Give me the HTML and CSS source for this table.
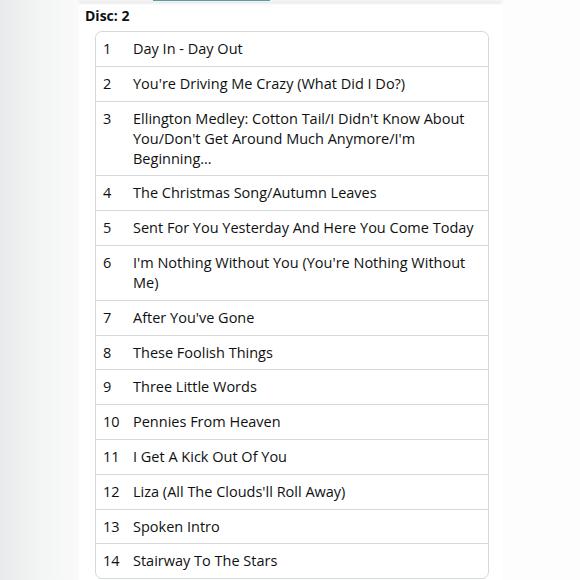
FILE: index.html
```html
<!DOCTYPE html>
<html>
<head>
	<title>Disc 2</title>
	<link rel="stylesheet" href="styles.css">
</head>
<body>
	<div class="page">
		<div class="side-left"></div>
		<div class="panel">
			<div class="top-bar"><div class="tab"></div></div>
			<h2 class="disc">Disc: 2</h2>
			<table class="tracks">
				<tr><td class="num">1</td><td class="title">Day In - Day Out</td></tr>
				<tr><td class="num">2</td><td class="title">You're Driving Me Crazy (What Did I Do?)</td></tr>
				<tr><td class="num">3</td><td class="title">Ellington Medley: Cotton Tail/I Didn't Know About You/Don't Get Around Much Anymore/I'm Beginning...</td></tr>
				<tr><td class="num">4</td><td class="title">The Christmas Song/Autumn Leaves</td></tr>
				<tr><td class="num">5</td><td class="title">Sent For You Yesterday And Here You Come Today</td></tr>
				<tr><td class="num">6</td><td class="title">I'm Nothing Without You (You're Nothing Without Me)</td></tr>
				<tr><td class="num">7</td><td class="title">After You've Gone</td></tr>
				<tr><td class="num">8</td><td class="title">These Foolish Things</td></tr>
				<tr><td class="num">9</td><td class="title">Three Little Words</td></tr>
				<tr><td class="num">10</td><td class="title">Pennies From Heaven</td></tr>
				<tr><td class="num">11</td><td class="title">I Get A Kick Out Of You</td></tr>
				<tr><td class="num">12</td><td class="title">Liza (All The Clouds'll Roll Away)</td></tr>
				<tr><td class="num">13</td><td class="title">Spoken Intro</td></tr>
				<tr><td class="num">14</td><td class="title">Stairway To The Stars</td></tr>
			</table>
		</div>
		<div class="side-right"></div>
	</div>
</body>
</html>
```

FILE: styles.css
```css
body {
	margin: 0;
	font-family: "Open Sans", Arial, sans-serif;
	color: #0f1111;
	background: #fdfdfd;
}

.page {
	display: flex;
	height: 580px;
	overflow: hidden;
}

.side-left {
	width: 79px;
	background: linear-gradient(to right, #e8eaeb, #f3f4f4 50%, #fafafa);
}

.panel {
	width: 423px;
	background: #ffffff;
}

.side-right {
	flex: 1;
	background: #fdfdfd;
}

.top-bar {
	height: 2px;
	background: #f2f2f2;
	box-shadow: 0px 1px 3px 0px rgba(0, 0, 0, 0.15);
	position: relative;
}

.tab {
	position: absolute;
	left: 74px;
	top: 0;
	width: 117px;
	height: 1px;
	background: #5b9aa6;
}

.disc {
	margin: 4px 0 5px 6px;
	font-size: 14px;
	line-height: 20px;
	font-weight: bold;
}

.tracks {
	margin-left: 16px;
	width: 394px;
	border-collapse: separate;
	border-spacing: 0;
	border: 1px solid #d5d9d9;
	border-radius: 7px;
	font-size: 14.5px;
	line-height: 20px;
}

.tracks td {
	padding: 7px 0 6.8px;
	border-top: 1px solid #d5d9d9;
	vertical-align: top;
}

.tracks tr:first-child td {
	border-top: none;
}

.num {
	width: 30px;
	padding-left: 7px !important;
}

.title {
	padding-right: 6px !important;
}
```
